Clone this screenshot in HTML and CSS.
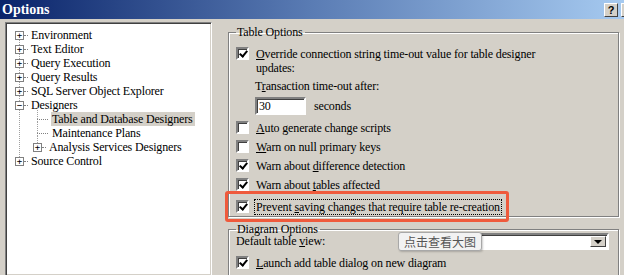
FILE: index.html
```html
<!DOCTYPE html>
<html lang="en">
<head>
  <meta charset="UTF-8">
  <title>Options</title>
  <link rel="stylesheet" href="styles.css">
</head>
<body>
  <div class="titlebar">
    <span class="title">Options</span>
    <span class="cap-btn">?</span>
    <span class="cap-btn cut"></span>
  </div>

  <div class="main">
    <div class="tree">
      <div class="tree-list">
        <div class="node"><span class="box">+</span><span class="dash"></span><span class="label">Environment</span></div>
        <div class="node"><span class="box">+</span><span class="dash"></span><span class="label">Text Editor</span></div>
        <div class="node"><span class="box">+</span><span class="dash"></span><span class="label">Query Execution</span></div>
        <div class="node"><span class="box">+</span><span class="dash"></span><span class="label">Query Results</span></div>
        <div class="node"><span class="box">+</span><span class="dash"></span><span class="label">SQL Server Object Explorer</span></div>
        <div class="node"><span class="box">&minus;</span><span class="dash"></span><span class="label">Designers</span></div>
        <div class="node child"><span class="dash long"></span><span class="label selected">Table and Database Designers</span></div>
        <div class="node child"><span class="dash long"></span><span class="label">Maintenance Plans</span></div>
        <div class="node child"><span class="box">+</span><span class="dash"></span><span class="label">Analysis Services Designers</span></div>
        <div class="node last"><span class="box">+</span><span class="dash"></span><span class="label">Source Control</span></div>
      </div>
    </div>

    <div class="options">
      <fieldset class="group table-opts">
        <legend>Table Options</legend>
        <div class="row top">
          <span class="check on"></span>
          <span class="text"><u>O</u>verride connection string time-out value for table designer<br>updates:</span>
        </div>
        <div class="sub">
          <div class="sub-label">T<u>r</u>ansaction time-out after:</div>
          <div class="timeout">
            <span class="input">30</span>
            <span>seconds</span>
          </div>
        </div>
        <div class="row"><span class="check"></span><span class="text"><u>A</u>uto generate change scripts</span></div>
        <div class="row"><span class="check"></span><span class="text"><u>W</u>arn on null primary keys</span></div>
        <div class="row"><span class="check on"></span><span class="text">Warn about <u>d</u>ifference detection</span></div>
        <div class="row"><span class="check on"></span><span class="text">Warn about <u>t</u>ables affected</span></div>
        <div class="row marked">
          <span class="check on"></span><span class="text focus">Prevent <u>s</u>aving changes that require table re-creation</span>
        </div>
      </fieldset>

      <fieldset class="group diagram-opts">
        <legend>Diagram Options</legend>
        <div class="view-row">
          <span>Default table <u>v</u>iew:</span>
          <span class="select"><span class="arrow"></span></span>
          <span class="tip">点击查看大图</span>
        </div>
        <div class="row"><span class="check on"></span><span class="text"><u>L</u>aunch add table dialog on new diagram</span></div>
      </fieldset>
    </div>
  </div>
</body>
</html>
```

FILE: styles.css
```css
body {
  margin: 0;
  width: 624px;
  height: 275px;
  overflow: hidden;
  background: #d4d0c8;
  font-family: "Liberation Serif", "Times New Roman", serif;
  font-size: 12px;
  letter-spacing: -0.15px;
  color: #000;
}
u {
  text-decoration: underline;
}

/* caption */
.titlebar {
  height: 19px;
  display: flex;
  align-items: center;
  padding-left: 2px;
  background: linear-gradient(to right, #0a246a, #5a7cb4 50%, #a6caf0);
}
.title {
  flex: 1;
  color: #fff;
  font-weight: bold;
  font-size: 14px;
  letter-spacing: 0;
}
.cap-btn {
  width: 12px;
  height: 12px;
  margin-right: 3px;
  background: #d4d0c8;
  border: 1px solid;
  border-color: #fff #404040 #404040 #fff;
  font: bold 11px "Liberation Sans", Arial, sans-serif;
  line-height: 12px;
  text-align: center;
}
.cap-btn.cut {
  width: 2px;
  margin-right: 0;
  border-right: none;
}

.main {
  display: flex;
  padding: 3px 0 0 5px;
}

/* tree */
.tree {
  width: 205px;
  height: 247px;
  background: #fff;
  border: 1px solid;
  border-color: #808080 #fff #fff #808080;
  box-shadow: inset 1px 1px 0 #404040, inset -1px -1px 0 #d4d0c8;
  padding-top: 5px;
}
.tree-list {
  position: relative;
}
.tree-list::before {
  content: "";
  position: absolute;
  left: 13px;
  top: 7px;
  height: 126px;
  border-left: 1px dotted #a0a0a0;
}
.node {
  display: flex;
  align-items: center;
  height: 14px;
  padding-left: 9px;
  position: relative;
}
.node.child {
  padding-left: 27px;
}
.node.child::before {
  content: "";
  position: absolute;
  left: 31px;
  top: -5px;
  height: 12px;
  border-left: 1px dotted #a0a0a0;
}
.box {
  width: 7px;
  height: 7px;
  border: 1px solid #808080;
  background: #fff;
  font: 9px/7px "DejaVu Sans Mono", monospace;
  text-align: center;
  color: #000;
  position: relative;
  z-index: 1;
}
.dash {
  width: 4px;
  border-top: 1px dotted #808080;
  margin-right: 2px;
}
.dash.long {
  width: 11px;
  margin-left: 4px;
  margin-right: 3px;
}
.label {
  line-height: 14px;
  padding: 0 2px 0 1px;
  white-space: nowrap;
}
.label.selected {
  background: #d4d0c8;
}

/* right side */
.options {
  flex: 1;
  padding-left: 16px;
  padding-right: 5px;
}
.group {
  margin: 0;
  border: 1px solid #808080;
  box-shadow: inset 1px 1px 0 #fff, 1px 1px 0 #fff;
  padding: 0 8px 0 7px;
}
.group legend {
  padding: 0 2px 0 1px;
  margin-left: 0;
  line-height: 14px;
}
.table-opts {
  height: 190px;
  margin-top: 3px;
}
.row {
  display: flex;
  align-items: center;
  height: 19px;
  position: relative;
}
.row.top {
  align-items: flex-start;
  height: auto;
  margin-top: 8px;
}
.row .text {
  line-height: 14px;
  padding: 0 1px;
  margin-left: 6px;
}
.check {
  width: 9px;
  height: 9px;
  flex: none;
  background: #fff;
  border: 2px solid;
  border-color: #808080 #fff #fff #808080;
  box-shadow: inset 1px 1px 0 #404040;
  position: relative;
}
.check.on::after {
  content: "";
  position: absolute;
  left: 3px;
  top: 0;
  width: 3px;
  height: 6px;
  border: solid #000;
  border-width: 0 2px 2px 0;
  transform: rotate(40deg);
}
.sub {
  padding-left: 19px;
  margin-top: 4px;
}
.sub-label {
  line-height: 14px;
}
.timeout {
  display: flex;
  align-items: center;
  gap: 8px;
  margin-top: 4px;
  margin-bottom: 3px;
}
.input {
  width: 45px;
  height: 14px;
  background: #fff;
  border: 2px solid;
  border-color: #808080 #fff #fff #808080;
  box-shadow: inset 1px 1px 0 #404040;
  line-height: 14px;
  padding-left: 2px;
}
.row.marked {
  margin-top: 3px;
}
.row.marked::before {
  content: "";
  position: absolute;
  left: -11px;
  width: 278px;
  top: -6px;
  bottom: -6px;
  border: 3px solid #ef5a3c;
  border-radius: 3px;
}
.focus {
  outline: 1px dotted #000;
}

.diagram-opts {
  margin-top: 6px;
  height: 60px;
}
.diagram-opts legend {
  line-height: 12px;
}
.view-row {
  display: flex;
  align-items: center;
  height: 17px;
  position: relative;
  margin-top: -2px;
  margin-bottom: 3px;
}
.select {
  margin-left: auto;
  margin-right: 1px;
  width: 196px;
  height: 11px;
  background: #fff;
  border: 2px solid;
  border-color: #808080 #fff #fff #808080;
  box-shadow: inset 1px 1px 0 #404040;
  display: flex;
  justify-content: flex-end;
  padding: 1px;
}
.arrow {
  width: 14px;
  height: 9px;
  background: #d4d0c8;
  border: 1px solid;
  border-color: #fff #404040 #404040 #fff;
  position: relative;
}
.arrow::after {
  content: "";
  position: absolute;
  left: 3px;
  top: 3px;
  border: 4px solid transparent;
  border-top: 4px solid #000;
  border-bottom: none;
}
.tip {
  position: absolute;
  left: 162px;
  top: -1px;
  padding: 1px 5px;
  background: #f2f2f2;
  border: 1px solid #a8a8a8;
  border-radius: 3px;
  box-shadow: 1px 1px 2px rgba(0, 0, 0, 0.2);
  color: #555;
  font-family: "Noto Sans CJK SC", sans-serif;
  font-size: 12px;
  letter-spacing: 0;
  line-height: 15px;
}
```
